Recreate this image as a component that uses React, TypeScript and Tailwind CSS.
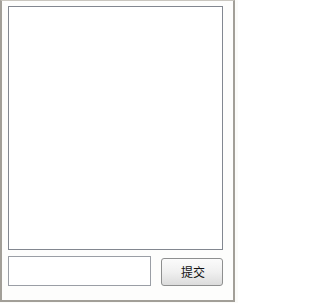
import React from "react";

export default function App() {
  return (
    <div className="w-[238px] h-[303px] bg-[#fbfbf9] overflow-hidden">
      <div className="w-[235px] h-[302px] border-l-2 border-r-2 border-b-2 border-t border-l-[#a29f98] border-r-[#a29f98] border-b-[#a29f98] border-t-[#c9c6bf] bg-[#fdfdfc] pl-[6px] pt-[5px] flex flex-col">
        <textarea className="w-[215px] h-[244px] border border-[#828790] bg-white resize-none outline-none block" />
        <div className="flex items-end mt-[6px] w-[215px]">
          <input
            type="text"
            className="w-[143px] h-[30px] border border-[#9a9ea5] bg-white outline-none block"
          />
          <button
            className="ml-[10px] w-[62px] h-[28px] border border-[#8e8f8f] rounded-[3px] bg-gradient-to-b from-[#fbfbfb] via-[#f0f0f0] to-[#dcdcdc] text-[12px] text-[#111] flex items-center justify-center pl-[2px]"
            style={{ fontFamily: '"Noto Sans CJK SC", "Noto Sans", sans-serif' }}
          >
            提交
          </button>
        </div>
      </div>
    </div>
  );
}
